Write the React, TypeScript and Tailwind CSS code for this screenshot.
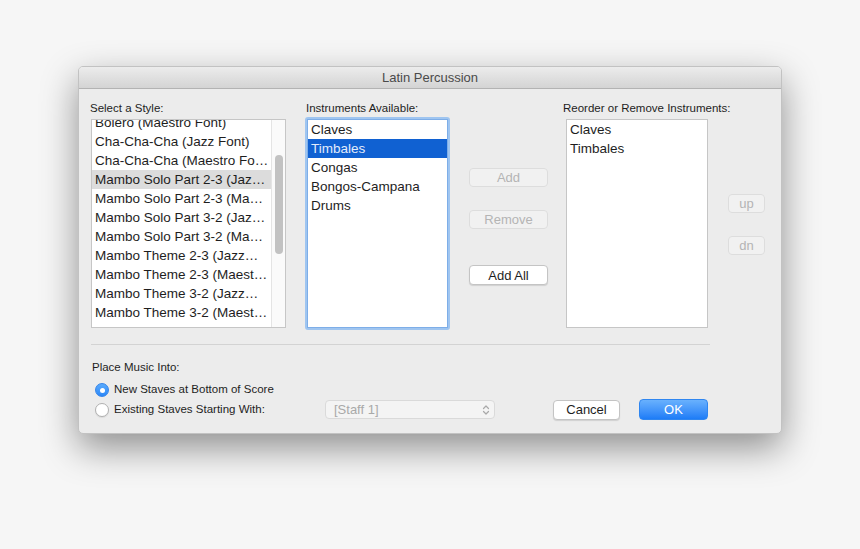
import React from "react";

const styles = [
  "Bolero (Maestro Font)",
  "Cha-Cha-Cha (Jazz Font)",
  "Cha-Cha-Cha (Maestro Fo…",
  "Mambo Solo Part 2-3 (Jaz…",
  "Mambo Solo Part 2-3 (Ma…",
  "Mambo Solo Part 3-2 (Jaz…",
  "Mambo Solo Part 3-2 (Ma…",
  "Mambo Theme 2-3 (Jazz…",
  "Mambo Theme 2-3 (Maest…",
  "Mambo Theme 3-2 (Jazz…",
  "Mambo Theme 3-2 (Maest…",
  "Salsa Bafo'a 2-3 (Jazz Fo…",
];

const available = ["Claves", "Timbales", "Congas", "Bongos-Campana", "Drums"];
const chosen = ["Claves", "Timbales"];

function DisabledButton({ label, w }: { label: string; w: string }) {
  return (
    <div
      className={`${w} h-[19px] rounded-[4px] bg-[#f1f1f1] border border-[#dddddd] flex items-center justify-center text-[13px] text-[#b4b4b4] leading-none`}
    >
      {label}
    </div>
  );
}

export default function App() {
  return (
    <div className="w-[860px] h-[549px] bg-[#f6f6f6] pt-[66px] pl-[78px] font-['Liberation_Sans',Arial,sans-serif] text-[#1e1e1e] overflow-hidden">
      <div className="w-[704px] h-[368px] rounded-[5px] bg-[#ececec] border border-[#c2c2c2] shadow-[0_14px_36px_rgba(0,0,0,0.42)] flex flex-col overflow-hidden">
        {/* Title bar */}
        <div className="h-[22px] shrink-0 pt-[1px] bg-gradient-to-b from-[#ececec] to-[#d4d4d4] border-b border-[#b3b3b3] flex items-center justify-center text-[13px] text-[#4a4a4a]">
          Latin Percussion
        </div>

        {/* Body */}
        <div className="flex flex-col pt-[12px]">
          <div className="flex flex-row">
            {/* Style list */}
            <div className="flex flex-col ml-[12px] w-[195px]">
              <div className="h-[14px] leading-[14px] text-[11.5px] -ml-[1px]">Select a Style:</div>
              <div className="mt-[4px] h-[209px] bg-white border border-[#c6c6c6] flex flex-row overflow-hidden">
                <div className="flex-1 overflow-hidden">
                  <div className="-mt-[7.5px] flex flex-col">
                    {styles.map((s, i) => (
                      <div
                        key={s}
                        className={`h-[19px] leading-[19px] pl-[3px] text-[13.5px] whitespace-nowrap ${i === 3 ? "bg-[#dcdcdc]" : ""}`}
                      >
                        {s}
                      </div>
                    ))}
                  </div>
                </div>
                <div className="w-[14px] shrink-0 bg-[#fafafa] border-l border-[#e4e4e4] flex flex-col items-center">
                  <div className="mt-[35px] w-[8px] h-[99px] rounded-full bg-[#c2c2c2]" />
                </div>
              </div>
            </div>

            {/* Instruments available */}
            <div className="flex flex-col ml-[19px] w-[145px]">
              <div className="h-[14px] leading-[14px] text-[11.5px] pl-[1px]">Instruments Available:</div>
              <div className="mt-[2px] h-[213px] rounded-[3px] border-2 border-[#9fc5f0] flex">
                <div className="flex-1 bg-white border border-[#7eaee8] flex flex-col">
                  {available.map((s, i) => (
                    <div
                      key={s}
                      className={`h-[19px] leading-[19px] pl-[3px] text-[13.5px] whitespace-nowrap ${i === 1 ? "bg-[#1061d2] text-[#e3ecfb]" : ""}`}
                    >
                      {s}
                    </div>
                  ))}
                </div>
              </div>
            </div>

            {/* Add / Remove buttons */}
            <div className="flex flex-col ml-[19px] w-[79px] pt-[67px]">
              <DisabledButton label="Add" w="w-[79px]" />
              <div className="mt-[23px]">
                <DisabledButton label="Remove" w="w-[79px]" />
              </div>
              <div className="mt-[36px] h-[20px] w-[79px] rounded-[4px] bg-white border border-[#c4c4c4] shadow-[0_1px_1px_rgba(0,0,0,0.12)] flex items-center justify-center text-[13px] leading-none">
                Add All
              </div>
            </div>

            {/* Reorder list */}
            <div className="flex flex-col ml-[15px] w-[145px]">
              <div className="h-[14px] leading-[14px] text-[11.5px] whitespace-nowrap">Reorder or Remove Instruments:</div>
              <div className="mt-[4px] ml-[3px] w-[142px] h-[209px] bg-white border border-[#c6c6c6] flex flex-col">
                {chosen.map((s) => (
                  <div key={s} className="h-[19px] leading-[19px] pl-[3px] text-[13.5px]">
                    {s}
                  </div>
                ))}
              </div>
            </div>

            {/* up / dn */}
            <div className="flex flex-col ml-[20px] w-[37px] pt-[93px]">
              <DisabledButton label="up" w="w-[37px]" />
              <div className="mt-[23px]">
                <DisabledButton label="dn" w="w-[37px]" />
              </div>
            </div>
          </div>

          {/* Separator */}
          <div className="mt-[14px] ml-[12px] w-[619px] h-px bg-[#d3d3d3]" />

          {/* Place Music Into */}
          <div className="mt-[15px] ml-[13px] h-[14px] leading-[14px] text-[11.5px]">Place Music Into:</div>

          <div className="mt-[8px] ml-[16px] h-[16px] flex flex-row items-center">
            <div className="w-[14px] h-[14px] rounded-full bg-gradient-to-b from-[#5aabfd] to-[#2a87f8] border border-[#3584e8] flex items-center justify-center">
              <div className="w-[5px] h-[5px] rounded-full bg-white" />
            </div>
            <div className="ml-[5px] text-[11.5px]">New Staves at Bottom of Score</div>
          </div>

          <div className="mt-[1px] ml-[16px] h-[21px] flex flex-row items-center">
            <div className="w-[230px] flex flex-row items-center">
              <div className="w-[14px] h-[14px] rounded-full bg-white border border-[#b0b0b0] shadow-[0_1px_1px_rgba(0,0,0,0.08)]" />
              <div className="ml-[5px] text-[11.5px]">Existing Staves Starting With:</div>
            </div>
            <div className="w-[170px] h-[19px] rounded-[4px] bg-[#f4f4f4] border border-[#dadada] flex flex-row items-center justify-between pl-[8px] pr-[4px]">
              <span className="text-[13px] text-[#a9a9a9] leading-none">[Staff 1]</span>
              <svg width="8" height="12" viewBox="0 0 8 12" fill="none">
                <path d="M1.5 4.5 L4 2 L6.5 4.5" stroke="#a9a9a9" strokeWidth="1.2" strokeLinecap="round" strokeLinejoin="round" />
                <path d="M1.5 7.5 L4 10 L6.5 7.5" stroke="#a9a9a9" strokeWidth="1.2" strokeLinecap="round" strokeLinejoin="round" />
              </svg>
            </div>
            <div className="ml-[58px] w-[67px] h-[20px] rounded-[4px] bg-white border border-[#c4c4c4] shadow-[0_1px_1px_rgba(0,0,0,0.12)] flex items-center justify-center text-[13px] leading-none">
              Cancel
            </div>
            <div className="ml-[19px] w-[69px] h-[21px] rounded-[4px] bg-gradient-to-b from-[#69b1fd] to-[#1c7cf7] border border-[#2f86f0] flex items-center justify-center text-[13px] text-white leading-none">
              OK
            </div>
          </div>
        </div>
      </div>
    </div>
  );
}
